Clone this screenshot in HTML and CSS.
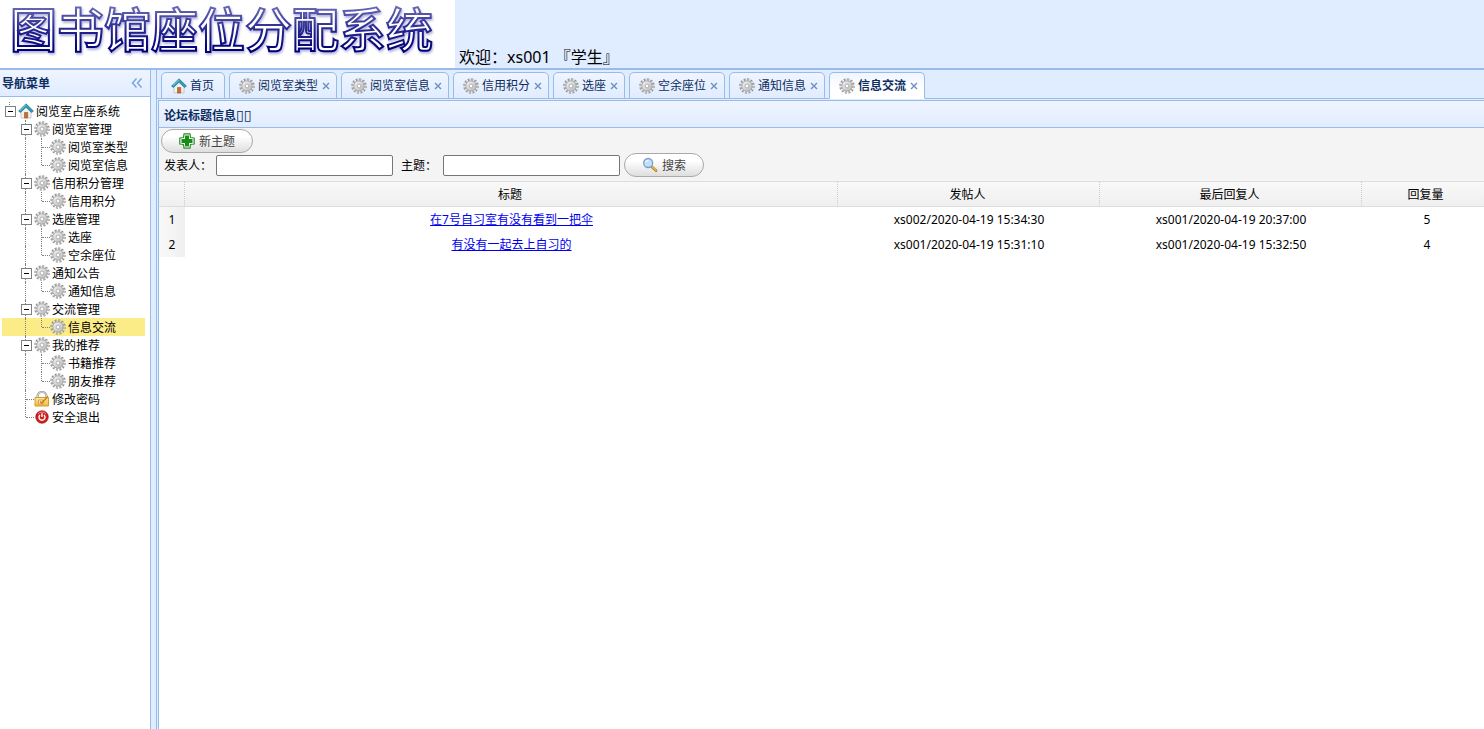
FILE: index.html
```
<!DOCTYPE html>
<html lang="zh-CN">
<head>
    <meta charset="UTF-8">
    <meta name="viewport" content="width=device-width, initial-scale=1.0">
    <title>图书馆座位分配系统</title>
    <link rel="stylesheet" href="styles.css">
</head>
<body>
    <!-- 图标 -->
    <svg class="icon-defs" width="0" height="0" aria-hidden="true">
        <defs>
            <linearGradient id="gear-fill" x1="0" y1="0" x2="1" y2="1">
                <stop offset="0" stop-color="#f6f6f6"/>
                <stop offset="1" stop-color="#b4b4b4"/>
            </linearGradient>
            <linearGradient id="lock-fill" x1="0" y1="0" x2="0" y2="1">
                <stop offset="0" stop-color="#ffe9a0"/>
                <stop offset="1" stop-color="#f0b73c"/>
            </linearGradient>
        </defs>
        <symbol id="icon-gear" viewBox="0 0 16 16">
            <circle cx="8" cy="8" r="6.6" fill="none" stroke="#8c8c8c" stroke-width="2.2" stroke-dasharray="2 1.456"/>
            <circle cx="8" cy="8" r="6.4" fill="none" stroke="#d2d2d2" stroke-width="1" stroke-dasharray="2 1.351"/>
            <circle cx="8" cy="8" r="5.2" fill="url(#gear-fill)" stroke="#a0a0a0" stroke-width=".8"/>
            <circle cx="8" cy="8" r="1.9" fill="#fff" stroke="#a2a2a2" stroke-width=".8"/>
        </symbol>
        <symbol id="icon-home" viewBox="0 0 16 16">
            <path d="M3 8l5-5 5 5v7H3z" fill="#f1f1f1" stroke="#b9b9b9" stroke-width=".7"/>
            <path d="M6.5 9.5h3.2V15H6.5z" fill="#c96f32" stroke="#96512a" stroke-width=".6"/>
            <path d="M8 .8L.6 8l1.800 1.500L8 4.300l5.600 5.200L15.400 8z" fill="#2f9bb5" stroke="#1d6f8c" stroke-width=".7"/>
            <path d="M8 1.700L2 7.400" stroke="#84d3e2" stroke-width="1" fill="none"/>
        </symbol>
        <symbol id="icon-lock" viewBox="0 0 16 16">
            <path d="M3.500 8V5.500a4.500 4.500 0 0 1 9 0V8" fill="none" stroke="#999" stroke-width="2.200"/>
            <path d="M3.500 8V5.500a4.500 4.500 0 0 1 9 0V8" fill="none" stroke="#ddd" stroke-width="1"/>
            <path d="M1 6.500h13.500v8.500H1z" fill="url(#lock-fill)" stroke="#d49a30"/>
            <path d="M4.500 9h4.500v4H4.500z" fill="#fff3c8" stroke="#c8963c" stroke-width=".8"/>
            <path d="M6 10.500l1.500 1.500L14 5.500" fill="none" stroke="#c98418" stroke-width="1.600"/>
        </symbol>
        <symbol id="icon-power" viewBox="0 0 16 16">
            <circle cx="8" cy="8" r="6.200" fill="#cf2020" stroke="#9c1212" stroke-width=".8"/>
            <path d="M4 5a5 5 0 0 1 8 0" fill="none" stroke="#f08b8b"/>
            <path d="M6 6a3 3 0 1 0 4 0M8 4.300v3.700" fill="none" stroke="#fff" stroke-width="1.400"/>
        </symbol>
        <symbol id="icon-add" viewBox="0 0 16 16">
            <path d="M5 .8h6L11.500 4.500 15.200 5v6l-3.700.5-.5 3.700H5l-.5-3.700L.8 11V5l3.700-.5z" fill="#fff" stroke="#2d8a2d" stroke-width="1.200" stroke-linejoin="round"/>
            <path d="M6 2.500h4V6h3.500v4H10v3.500H6V10H2.500V6H6z" fill="#149114"/>
        </symbol>
        <symbol id="icon-search" viewBox="0 0 16 16">
            <path d="M9.500 9.500l4.500 4" stroke="#b07a20" stroke-width="2.800" stroke-linecap="round"/>
            <path d="M10 9.700l4 3.600" stroke="#f0b94e" stroke-width="1.400" stroke-linecap="round"/>
            <circle cx="6.200" cy="6" r="4.500" fill="#bfe0fb" stroke="#7a9fd0" stroke-width="1.300"/>
            <path d="M3.800 5.500a2.500 2.500 0 0 1 2.700-2" stroke="#fff" stroke-width="1.200" fill="none"/>
        </symbol>
        <symbol id="icon-close" viewBox="0 0 8 8">
            <path d="M1 1l6 6M7 1L1 7" stroke="#6d8fc4" stroke-width="1.400"/>
        </symbol>
    </svg>

    <!-- 顶部 -->
    <header class="top">
        <h1 class="logo">
            <svg width="455" height="68" role="img" aria-label="图书馆座位分配系统">
                <defs>
                    <linearGradient id="logo-line" gradientUnits="userSpaceOnUse" x1="0" y1="6" x2="0" y2="50">
                        <stop offset="0" stop-color="#6a6ab8"/>
                        <stop offset=".6" stop-color="#20208c"/>
                        <stop offset="1" stop-color="#000078"/>
                    </linearGradient>
                </defs>
                <text class="logo-text" x="10" y="47">图书馆座位分配系统</text>
            </svg>
        </h1>
        <p class="welcome">欢迎：xs001 『学生』</p>
    </header>

    <div class="main-container">
        <!-- 导航菜单 -->
        <nav class="side">
            <div class="panel-header">
                <h2>导航菜单</h2>
                <button type="button" class="collapse-btn" aria-label="收起">
                    <svg width="12" height="10" viewBox="0 0 12 10"><path d="M5.500.500L1.500 5l4 4.500M10.500.500L6.500 5l4 4.500" fill="none" stroke="#74a5dc" stroke-width="1.400"/></svg>
                </button>
            </div>
            <ul class="tree">
                <li>
                    <a class="node" href="#"><i class="expander root"></i><svg class="icon"><use href="#icon-home"/></svg><span>阅览室占座系统</span></a>
                    <ul>
                        <li>
                            <a class="node" href="#"><i></i><i class="expander"></i><svg class="icon"><use href="#icon-gear"/></svg><span>阅览室管理</span></a>
                            <ul>
                                <li><a class="node" href="#"><i></i><i class="line"></i><i class="join"></i><svg class="icon"><use href="#icon-gear"/></svg><span>阅览室类型</span></a></li>
                                <li><a class="node" href="#"><i></i><i class="line"></i><i class="join last"></i><svg class="icon"><use href="#icon-gear"/></svg><span>阅览室信息</span></a></li>
                            </ul>
                        </li>
                        <li>
                            <a class="node" href="#"><i></i><i class="expander"></i><svg class="icon"><use href="#icon-gear"/></svg><span>信用积分管理</span></a>
                            <ul>
                                <li><a class="node" href="#"><i></i><i class="line"></i><i class="join last"></i><svg class="icon"><use href="#icon-gear"/></svg><span>信用积分</span></a></li>
                            </ul>
                        </li>
                        <li>
                            <a class="node" href="#"><i></i><i class="expander"></i><svg class="icon"><use href="#icon-gear"/></svg><span>选座管理</span></a>
                            <ul>
                                <li><a class="node" href="#"><i></i><i class="line"></i><i class="join"></i><svg class="icon"><use href="#icon-gear"/></svg><span>选座</span></a></li>
                                <li><a class="node" href="#"><i></i><i class="line"></i><i class="join last"></i><svg class="icon"><use href="#icon-gear"/></svg><span>空余座位</span></a></li>
                            </ul>
                        </li>
                        <li>
                            <a class="node" href="#"><i></i><i class="expander"></i><svg class="icon"><use href="#icon-gear"/></svg><span>通知公告</span></a>
                            <ul>
                                <li><a class="node" href="#"><i></i><i class="line"></i><i class="join last"></i><svg class="icon"><use href="#icon-gear"/></svg><span>通知信息</span></a></li>
                            </ul>
                        </li>
                        <li>
                            <a class="node" href="#"><i></i><i class="expander"></i><svg class="icon"><use href="#icon-gear"/></svg><span>交流管理</span></a>
                            <ul>
                                <li><a class="node selected" href="#"><i></i><i class="line"></i><i class="join last"></i><svg class="icon"><use href="#icon-gear"/></svg><span>信息交流</span></a></li>
                            </ul>
                        </li>
                        <li>
                            <a class="node" href="#"><i></i><i class="expander"></i><svg class="icon"><use href="#icon-gear"/></svg><span>我的推荐</span></a>
                            <ul>
                                <li><a class="node" href="#"><i></i><i class="line"></i><i class="join"></i><svg class="icon"><use href="#icon-gear"/></svg><span>书籍推荐</span></a></li>
                                <li><a class="node" href="#"><i></i><i class="line"></i><i class="join last"></i><svg class="icon"><use href="#icon-gear"/></svg><span>朋友推荐</span></a></li>
                            </ul>
                        </li>
                        <li><a class="node" href="#"><i></i><i class="join"></i><svg class="icon"><use href="#icon-lock"/></svg><span>修改密码</span></a></li>
                        <li><a class="node" href="#"><i></i><i class="join last"></i><svg class="icon"><use href="#icon-power"/></svg><span>安全退出</span></a></li>
                    </ul>
                </li>
            </ul>
        </nav>

        <!-- 右侧内容 -->
        <main class="center">
            <ul class="tabs">
                <li class="tab home"><a href="#"><svg class="icon"><use href="#icon-home"/></svg>首页</a></li>
                <li class="tab"><a href="#"><svg class="icon"><use href="#icon-gear"/></svg>阅览室类型</a><button type="button" aria-label="关闭"><svg width="8" height="8"><use href="#icon-close"/></svg></button></li>
                <li class="tab"><a href="#"><svg class="icon"><use href="#icon-gear"/></svg>阅览室信息</a><button type="button" aria-label="关闭"><svg width="8" height="8"><use href="#icon-close"/></svg></button></li>
                <li class="tab"><a href="#"><svg class="icon"><use href="#icon-gear"/></svg>信用积分</a><button type="button" aria-label="关闭"><svg width="8" height="8"><use href="#icon-close"/></svg></button></li>
                <li class="tab"><a href="#"><svg class="icon"><use href="#icon-gear"/></svg>选座</a><button type="button" aria-label="关闭"><svg width="8" height="8"><use href="#icon-close"/></svg></button></li>
                <li class="tab"><a href="#"><svg class="icon"><use href="#icon-gear"/></svg>空余座位</a><button type="button" aria-label="关闭"><svg width="8" height="8"><use href="#icon-close"/></svg></button></li>
                <li class="tab"><a href="#"><svg class="icon"><use href="#icon-gear"/></svg>通知信息</a><button type="button" aria-label="关闭"><svg width="8" height="8"><use href="#icon-close"/></svg></button></li>
                <li class="tab active"><a href="#"><svg class="icon"><use href="#icon-gear"/></svg>信息交流</a><button type="button" aria-label="关闭"><svg width="8" height="8"><use href="#icon-close"/></svg></button></li>
            </ul>

            <section class="panel">
                <div class="panel-header">
                    <h2>论坛标题信息<span class="box">▯▯</span></h2>
                </div>
                <form class="toolbar">
                    <button type="button" class="btn btn-add"><svg class="icon"><use href="#icon-add"/></svg>新主题</button>
                    <div class="search-row">
                        <label for="author">发表人：</label>
                        <input type="text" id="author" name="author">
                        <label for="topic">主题：</label>
                        <input type="text" id="topic" name="topic">
                        <button type="button" class="btn"><svg class="icon"><use href="#icon-search"/></svg>搜索</button>
                    </div>
                </form>
                <div class="grid">
                    <table>
                        <colgroup>
                            <col class="col-num">
                            <col>
                            <col class="col-user">
                            <col class="col-user">
                            <col class="col-count">
                        </colgroup>
                        <thead>
                            <tr>
                                <th></th>
                                <th>标题</th>
                                <th>发帖人</th>
                                <th>最后回复人</th>
                                <th>回复量</th>
                            </tr>
                        </thead>
                        <tbody>
                            <tr>
                                <td>1</td>
                                <td><a href="#">在7号自习室有没有看到一把伞</a></td>
                                <td>xs002/2020-04-19 15:34:30</td>
                                <td>xs001/2020-04-19 20:37:00</td>
                                <td>5</td>
                            </tr>
                            <tr>
                                <td>2</td>
                                <td><a href="#">有没有一起去上自习的</a></td>
                                <td>xs001/2020-04-19 15:31:10</td>
                                <td>xs001/2020-04-19 15:32:50</td>
                                <td>4</td>
                            </tr>
                        </tbody>
                    </table>
                </div>
            </section>
        </main>
    </div>
</body>
</html>
```
FILE: styles.css
```
* {
    box-sizing: border-box;
}
body {
    margin: 0;
    height: 100vh;
    display: flex;
    flex-direction: column;
    overflow: hidden;
    font-family: "Noto Sans", "Noto Sans CJK SC", sans-serif;
    font-size: 12px;
    line-height: 18px;
    color: #000;
    background-color: #fff;
}
ul {
    list-style: none;
    margin: 0;
    padding: 0;
}
button, input {
    font-family: inherit;
    font-size: 12px;
}
.icon-defs {
    position: absolute;
}
.icon {
    width: 16px;
    height: 16px;
    flex: none;
}

/* 顶部 */
.top {
    display: flex;
    align-items: flex-end;
    background-color: #e0ecff;
    border-bottom: 2px solid #99bbe8;
}
.logo {
    margin: 0;
    background-color: #fff;
}
.logo svg {
    display: block;
    overflow: visible;
}
.logo-text {
    font-family: "Noto Sans CJK SC", sans-serif;
    font-size: 47px;
    font-weight: 500;
    fill: #fff;
    stroke: url(#logo-line);
    stroke-width: 2px;
    filter: drop-shadow(1px 2px 1px #b4b4dc);
}
.welcome {
    margin: 0 4px;
    font-size: 16px;
    line-height: 22px;
}

.main-container {
    flex: 1;
    display: flex;
    gap: 5px;
    min-height: 0;
    background-color: #e0ecff;
}
.panel-header {
    display: flex;
    align-items: center;
    justify-content: space-between;
    height: 27px;
    background: linear-gradient(#eff5ff, #e0ecff);
    border-bottom: 1px solid #99bbe8;
}
.panel-header h2 {
    margin: 0;
    padding-top: 2px;
    font-size: 12px;
    color: #0e2d5f;
}

/* 左侧树 */
.side {
    width: 151px;
    flex: none;
    background-color: #fff;
    border-right: 1px solid #99bbe8;
}
.side .panel-header {
    padding: 0 7px 0 2px;
}
.collapse-btn {
    display: flex;
    padding: 0;
    border: none;
    background: none;
    cursor: pointer;
}
.tree {
    padding: 5px 5px 5px 2px;
}
.node {
    display: flex;
    align-items: center;
    height: 18px;
    color: #000;
    text-decoration: none;
    white-space: nowrap;
}
.node:hover {
    background-color: #eaf2ff;
}
.node.selected {
    background-color: #fbec88;
}
.node span {
    padding: 2px 2px 0;
}
.node i {
    position: relative;
    flex: none;
    width: 16px;
    height: 18px;
}
.line::before, .join::before, .expander::before {
    content: "";
    position: absolute;
    left: 7px;
    top: 0;
    height: 18px;
    border-left: 1px dotted #808080;
}
.join.last::before, .expander.root::before {
    height: 9px;
}
.join::after {
    content: "";
    position: absolute;
    left: 8px;
    top: 9px;
    width: 8px;
    border-top: 1px dotted #808080;
}
.expander::after {
    content: "";
    position: absolute;
    left: 3px;
    top: 4px;
    width: 9px;
    height: 9px;
    border: 1px solid #808080;
    background: linear-gradient(#000, #000) center / 5px 1px no-repeat #fff;
}

/* 标签页 */
.center {
    flex: 1;
    min-width: 0;
    display: flex;
    flex-direction: column;
    border-left: 1px solid #99bbe8;
}
.tabs {
    display: flex;
    gap: 4px;
    padding: 2px 4px 0;
    border-bottom: 1px solid #99bbe8;
}
.tab {
    display: flex;
    align-items: center;
    height: 27px;
    margin-bottom: -1px;
    padding: 0 6px 0 9px;
    border: 1px solid #99bbe8;
    border-radius: 5px 5px 0 0;
    background: linear-gradient(#eff5ff, #e0ecff);
}
.tab.home {
    padding-right: 10px;
}
.tab a {
    display: flex;
    align-items: center;
    gap: 3px;
    color: #0e2d5f;
    text-decoration: none;
    white-space: nowrap;
}
.tab button {
    display: flex;
    margin-left: 4px;
    padding: 0;
    border: none;
    background: none;
    cursor: pointer;
}
.tab.active {
    background: linear-gradient(#eff5ff, #fff 60%);
    border-bottom-color: #fff;
}
.tab.active a {
    font-weight: bold;
}

/* 内容面板 */
.panel {
    flex: 1;
    margin: 1px 0 0 1px;
    border: solid #99bbe8;
    border-width: 1px 0 0 1px;
    background-color: #fff;
    overflow: hidden;
}
.panel .panel-header {
    padding: 0 5px;
}
.box {
    font-family: "DejaVu Sans", sans-serif;
    font-size: 14px;
    font-weight: normal;
}
.toolbar {
    padding: 1px 2px 4px;
    background-color: #f4f4f4;
}
.search-row {
    display: flex;
    align-items: center;
    gap: 4px;
    padding-left: 3px;
}
.search-row label {
    padding-top: 2px;
    white-space: nowrap;
}
.search-row input + label {
    margin: 0 2px 0 4px;
}
.search-row input {
    width: 177px;
    height: 21px;
    padding: 1px 2px;
    border: 1px solid #767676;
    border-radius: 2px;
    background-color: #fff;
}
.btn {
    display: flex;
    align-items: center;
    gap: 4px;
    height: 24px;
    padding: 0 17px;
    border: 1px solid #aaa;
    border-radius: 12px;
    background: linear-gradient(#fff 30%, #dedede);
    color: #444;
    cursor: pointer;
}

/* 表格 */
.grid {
    margin-right: -8px;
}
table {
    width: 100%;
    table-layout: fixed;
    border-collapse: separate;
    border-spacing: 0;
}
.col-num {
    width: 26px;
}
.col-user {
    width: 262px;
}
.col-count {
    width: 130px;
}
th, td {
    height: 25px;
    padding: 0;
    text-align: center;
    font-weight: normal;
}
th {
    height: 26px;
    padding: 1px 2px 0 0;
    border: solid #ddd;
    border-width: 1px 0;
    border-right: 1px dotted #ccc;
    background: linear-gradient(#f9f9f9, #efefef);
}
tbody td:first-child {
    background: linear-gradient(90deg, #f9f9f9, #efefef);
}
tbody tr:hover {
    background-color: #eaf2ff;
}
td a {
    color: #0000ee;
}
```
